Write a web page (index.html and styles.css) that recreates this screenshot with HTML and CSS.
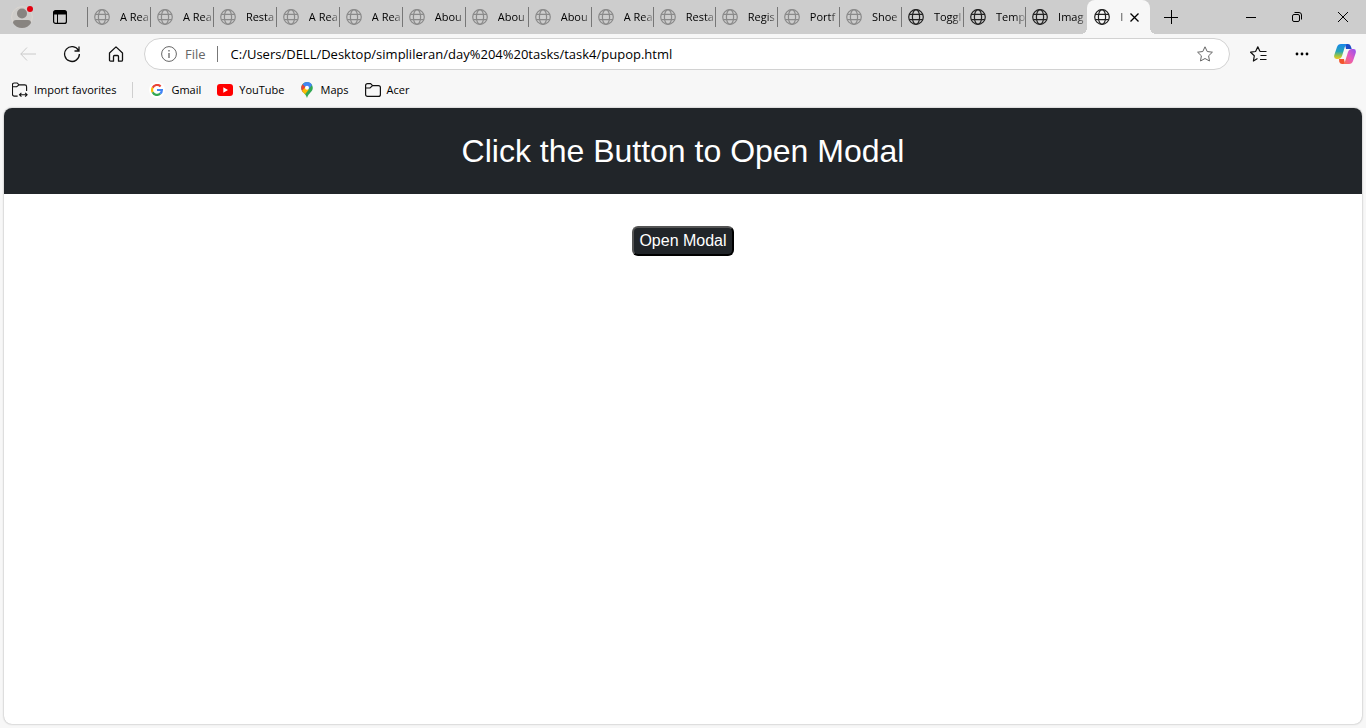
FILE: index.html
```html
<!DOCTYPE html>
<html lang="en">
<head>
<meta charset="utf-8">
<title>Modal</title>
<link rel="stylesheet" href="styles.css">
</head>
<body>
<svg class="defs" width="0" height="0" aria-hidden="true">
  <symbol id="globe" viewBox="0 0 16 16"><g fill="none" stroke="currentColor" stroke-width="1.2"><circle cx="8" cy="8" r="7.3"/><ellipse cx="8" cy="8" rx="3.6" ry="7.3"/><path d="M1.2 5.3h13.6M1.2 10.7h13.6"/></g></symbol>
</svg>
<div class="tabbar">
  <button class="profile" aria-label="Profile">
    <svg width="22" height="22" viewBox="0 0 22 22"><circle cx="11" cy="11" r="10.4" fill="#cfcdca" stroke="#dad6d1"/><circle cx="11" cy="7.5" r="5" fill="#888480"/><path d="M2 17q0-3 3-3h12q3 0 3 3-3 5-9 5t-9-5z" fill="#888480"/></svg>
    <span class="dot"></span>
  </button>
  <button class="workspace" aria-label="Tab actions">
    <svg width="14" height="14" viewBox="0 0 14 14"><rect x=".6" y=".6" width="12.8" height="12.8" rx="2" fill="none" stroke="#000" stroke-width="1.2"/><path d="M.5 4.5V2.5q0-2 2-2h9q2 0 2 2v2z"/><path d="M4.5 4v9.500" stroke="#000"/></svg>
  </button>
  <div class="tabs">
    <button class="tab wide"><svg><use href="#globe"/></svg><span>A Rea</span></button>
    <button class="tab wide"><svg><use href="#globe"/></svg><span>A Rea</span></button>
    <button class="tab wide"><svg><use href="#globe"/></svg><span>Resta</span></button>
    <button class="tab wide"><svg><use href="#globe"/></svg><span>A Rea</span></button>
    <button class="tab wide"><svg><use href="#globe"/></svg><span>A Rea</span></button>
    <button class="tab wide"><svg><use href="#globe"/></svg><span>Abou</span></button>
    <button class="tab wide"><svg><use href="#globe"/></svg><span>Abou</span></button>
    <button class="tab wide"><svg><use href="#globe"/></svg><span>Abou</span></button>
    <button class="tab"><svg><use href="#globe"/></svg><span>A Rea</span></button>
    <button class="tab"><svg><use href="#globe"/></svg><span>Resta</span></button>
    <button class="tab"><svg><use href="#globe"/></svg><span>Regis</span></button>
    <button class="tab"><svg><use href="#globe"/></svg><span>Portf</span></button>
    <button class="tab"><svg><use href="#globe"/></svg><span>Shoe</span></button>
    <button class="tab loaded"><svg><use href="#globe"/></svg><span>Toggl</span></button>
    <button class="tab loaded"><svg><use href="#globe"/></svg><span>Temp</span></button>
    <button class="tab loaded"><svg><use href="#globe"/></svg><span>Imag</span></button>
    <div class="tab wide loaded active"><svg><use href="#globe"/></svg><span class="clip">I</span><button class="close" aria-label="Close tab"><svg width="9" height="9" viewBox="0 0 9 9"><path d="M.5.5l8 8M8.500.5l-8 8" stroke="#000" stroke-width="1.300"/></svg></button></div>
  </div>
  <button class="newtab" aria-label="New tab"><svg width="14" height="14"><path d="M7.500 0v14M0 7.500h14" stroke="#000"/></svg></button>
  <div class="window">
    <button aria-label="Minimize"><svg width="10" height="10"><path d="M0 5.500h10" stroke="#000"/></svg></button>
    <button aria-label="Restore"><svg width="10" height="10" fill="none" stroke="#000"><rect x=".5" y="2.500" width="7" height="7" rx="1.500"/><path d="M2.500.5H7q2.500 0 2.500 2.500v4.500"/></svg></button>
    <button aria-label="Close"><svg width="10" height="10"><path d="M0 0l10 10M10 0L0 10" stroke="#000"/></svg></button>
  </div>
</div>
<div class="toolbar">
  <button class="nav" aria-label="Back"><svg width="16" height="14" fill="none" stroke="#cacaca"><path d="M7 .5L.8 7 7 13.500M.8 7H16"/></svg></button>
  <button class="nav" aria-label="Refresh"><svg width="18" height="18" fill="none" stroke="#111" stroke-width="1.300"><path d="M15.500 5.500A7.400 7.400 0 1 0 16.400 9M16 1.500v4.500h-4.500"/></svg></button>
  <button class="nav" aria-label="Home"><svg width="16" height="16" fill="none" stroke="#111" stroke-width="1.300" stroke-linejoin="round"><path d="M1.500 7L8 .9 14.500 7v7q0 1.200-1.200 1.200H10.500V10.500q0-1-1-1h-3q-1 0-1 1v4.700H2.700q-1.200 0-1.200-1.200z"/></svg></button>
  <div class="address">
    <svg width="16" height="16" fill="none" stroke="#666"><circle cx="8" cy="8" r="7.400"/><path d="M8 7v5M8 4v1.500" stroke-width="1.300"/></svg>
    <label for="url">File</label>
    <input id="url" type="text" value="C:/Users/DELL/Desktop/simplileran/day%204%20tasks/task4/pupop.html">
    <button aria-label="Add to favorites"><svg width="16" height="16" viewBox="0 0 16 16" fill="none" stroke="#666" stroke-linejoin="round"><path d="M8 .8l2.200 4.700 5.200.7-3.800 3.600.9 5.200L8 12.500 3.500 15l.9-5.200L.6 6.200l5.200-.7z"/></svg></button>
  </div>
  <div class="actions">
    <button aria-label="Favorites"><svg width="17" height="16" fill="none" stroke="#111" stroke-width="1.200" stroke-linejoin="round"><path d="M7.500 12.600L3.400 15l.9-5.200L.6 6.200l5-.7L7.800.8 10 5.500M10 5.500h6.500M10.500 9.500h6M10 13.500h6.500"/></svg></button>
    <button aria-label="Settings and more"><svg width="14" height="4"><circle cx="2" cy="2" r="1.400"/><circle cx="7" cy="2" r="1.400"/><circle cx="12" cy="2" r="1.400"/></svg></button>
    <button aria-label="Copilot"><svg width="22" height="20" viewBox="0 0 22 20">
      <defs>
        <linearGradient id="ca" x1="0" y1="0" x2="0" y2="1"><stop offset="0" stop-color="#1686ea"/><stop offset=".5" stop-color="#28a5b5"/><stop offset=".8" stop-color="#a5c63b"/><stop offset="1" stop-color="#f5c52b"/></linearGradient>
        <linearGradient id="cb" x1="1" y1="0" x2="0" y2="1"><stop offset="0" stop-color="#9152f0"/><stop offset=".5" stop-color="#e65abf"/><stop offset="1" stop-color="#ff7042"/></linearGradient>
      </defs>
      <path d="M11 0h3q2 0 2.700 2l1 3H12z" fill="#1b4cc8"/><path d="M5 15h5l1 5H8q-2 0-2.700-2z" fill="#f2542d"/>
      <path d="M7 0h6q-1.500.5-2.200 3L8 12q-1 3-4 3H2.500Q-.6 15 .3 11L3 3q1-3 4-3z" fill="url(#ca)"/>
      <path d="M15 20H9q1.500-.5 2.200-3L14 8q1-3 4-3h1.500q3.100 0 2.200 4L19 17q-1 3-4 3z" fill="url(#cb)"/></svg></button>
  </div>
</div>
<nav class="bookmarks">
  <a href="#"><svg width="16" height="16" viewBox="0 0 17 16" fill="none" stroke="#111" stroke-width="1.200"><path d="M6 14.500H2.500q-2 0-2-2v-10q0-2 2-2h3l2 2h6q2 0 2 2V9M.5 4.500H5l2.500-2M8 13h8M10 11l-2 2 2 2M14 11l2 2-2 2"/></svg>Import favorites</a>
  <span class="rule"></span>
  <a href="#"><span class="badge"><svg width="12" height="12" viewBox="0 0 12 12" fill="none" stroke-width="2.200"><path d="M9.600 2.500A4.900 4.900 0 0 0 1.600 3.800" stroke="#ea4335"/><path d="M1.600 3.800a4.900 4.900 0 0 0 0 4.400" stroke="#fbbc05"/><path d="M1.600 8.200a4.900 4.900 0 0 0 7.600 1.500" stroke="#34a853"/><path d="M6 6h4.900q0 2.300-1.700 3.700" stroke="#4285f4"/></svg></span>Gmail</a>
  <a href="#"><svg width="16" height="12"><rect width="16" height="12" rx="3" fill="#f00"/><path d="M6.300 3.300v5.400L11 6z" fill="#fff"/></svg>YouTube</a>
  <a href="#" class="maps"><svg width="12" height="16" viewBox="0 0 12 16"><path d="M6 0a5.800 5.800 0 0 1 5.800 5.800C11.800 10 7.500 11 6 16 4.500 11 .2 10 .2 5.800A5.800 5.800 0 0 1 6 0z" fill="#34a853"/><path d="M1.500 2.200L6 6 2 10.500Q.2 8.500.2 5.800q0-2 1.300-3.600z" fill="#ea4335"/><path d="M1 8.800L4.500 5l3.200 2.800L4 12.300Q2 10.500 1 8.800z" fill="#fbbc05"/><path d="M1.500 2.200Q3.500 0 6 0q3.500 0 5 3L7.800 7 4 4.500z" fill="#4285f4"/><circle cx="6" cy="5.800" r="2" fill="#fff"/></svg>Maps</a>
  <a href="#"><svg width="16" height="14" fill="none" stroke="#111" stroke-width="1.200"><path d="M.6 2.600q0-2 2-2h3l2 2h5.800q2 0 2 2v6.800q0 2-2 2H2.600q-2 0-2-2zM.6 5H5l2.600-2.400"/></svg>Acer</a>
</nav>
<main class="page">
  <header class="banner"><h1>Click the Button to Open Modal</h1></header>
  <button class="open">Open Modal</button>
</main>
</body>
</html>
```

FILE: styles.css
```css
* { box-sizing: border-box; }
body {
  margin: 0;
  min-height: 100vh;
  display: flex;
  flex-direction: column;
  background: #f7f7f7;
  color: #000;
  font: 12px/16px "Open Sans", "Noto Sans", sans-serif;
}
button { padding: 0; border: 0; background: none; font: inherit; color: inherit; }
svg { display: block; flex: none; }
.defs { position: absolute; }

.tabbar { display: flex; height: 34px; background: #cdcdcd; }
.profile { position: relative; margin-left: 11px; width: 22px; display: grid; place-items: center; }
.dot { position: absolute; top: 6px; right: 0; width: 6px; height: 6px; border-radius: 50%; background: #e3000f; }
.workspace { width: 54px; padding-left: 20px; }
.tabs { display: flex; flex: 0 1 1063px; min-width: 0; }
.tab {
  flex: 62 1 0;
  min-width: 0;
  display: flex;
  align-items: center;
  gap: 10px;
  padding-left: 7px;
  background: linear-gradient(#777, #777) left center / 1px 20px no-repeat;
}
.tab.wide { flex-grow: 63; }
.tab svg { width: 16px; height: 16px; color: #8a8a8a; }
.tab.loaded > svg { color: #222; }
.tab span {
  flex: 1;
  min-width: 0;
  overflow: hidden;
  white-space: nowrap;
  text-align: left;
  font-size: 11px;
  mask-image: linear-gradient(to left, rgb(0 0 0 / .2), #000 10px);
}
.tab.active {
  position: relative;
  background: #f7f7f7;
  border-radius: 8px 8px 0 0;
}
.tab.active::before, .tab.active::after {
  content: "";
  position: absolute;
  bottom: 0;
  width: 6px;
  height: 6px;
}
.tab.active::before { right: 100%; background: radial-gradient(circle at 0 0, transparent 6px, #f7f7f7 6px); }
.tab.active::after { left: 100%; background: radial-gradient(circle at 100% 0, transparent 6px, #f7f7f7 6px); }
.tab .clip { flex: 0 0 4px; mask-image: none; opacity: .7; }
.tab .close svg { width: 9px; height: 9px; }
.tab .close { margin-left: -4px; }
.newtab { width: 42px; display: grid; place-items: center; }
.window { margin-left: auto; display: flex; }
.window button { width: 46px; display: grid; place-items: center; }

.toolbar { display: flex; align-items: center; height: 40px; padding-left: 6px; }
.nav { width: 44px; height: 32px; display: grid; place-items: center; }
.address {
  flex: 1;
  display: flex;
  align-items: center;
  height: 32px;
  margin-left: 6px;
  padding: 0 16px;
  background: #fff;
  border: 1px solid #d2d2d2;
  border-radius: 16px;
  font-size: 13px;
}
.address label { margin-left: 8px; padding-right: 11px; border-right: 1px solid #777; color: #666; }
.address input { flex: 1; min-width: 0; margin-left: 13px; padding: 0; border: 0; outline: 0; background: none; font: inherit; color: #000; }
.actions { display: flex; align-items: center; padding-left: 7px; }
.actions button { width: 43px; height: 32px; display: grid; place-items: center; }

.bookmarks { display: flex; align-items: center; height: 34px; padding: 0 12px 2px; gap: 16px; font-size: 11px; }
.bookmarks a { display: flex; align-items: center; gap: 6px; color: #000; text-decoration: none; }
.bookmarks .maps { gap: 8px; }
.rule { width: 1px; height: 16px; background: #cfcfcf; }
.badge { display: grid; place-items: center; width: 16px; height: 16px; border-radius: 50%; background: #fff; }

.page {
  flex: 1;
  margin: 0 4px 4px;
  background: #fff;
  border-radius: 8px;
  overflow: hidden;
  box-shadow: 0 0 2px #999;
  font-family: "Liberation Sans", Arial, sans-serif;
  text-align: center;
}
.banner { padding: 24px; background: #212529; color: #fff; }
.banner h1 { margin: 0; font-size: 32px; line-height: 38px; font-weight: 400; }
.open {
  margin-top: 32px;
  padding: 1px 5px;
  border: 2px outset #000;
  border-radius: 6px;
  background: #212529;
  color: #fff;
  font-size: 16px;
  line-height: 24px;
}
```
